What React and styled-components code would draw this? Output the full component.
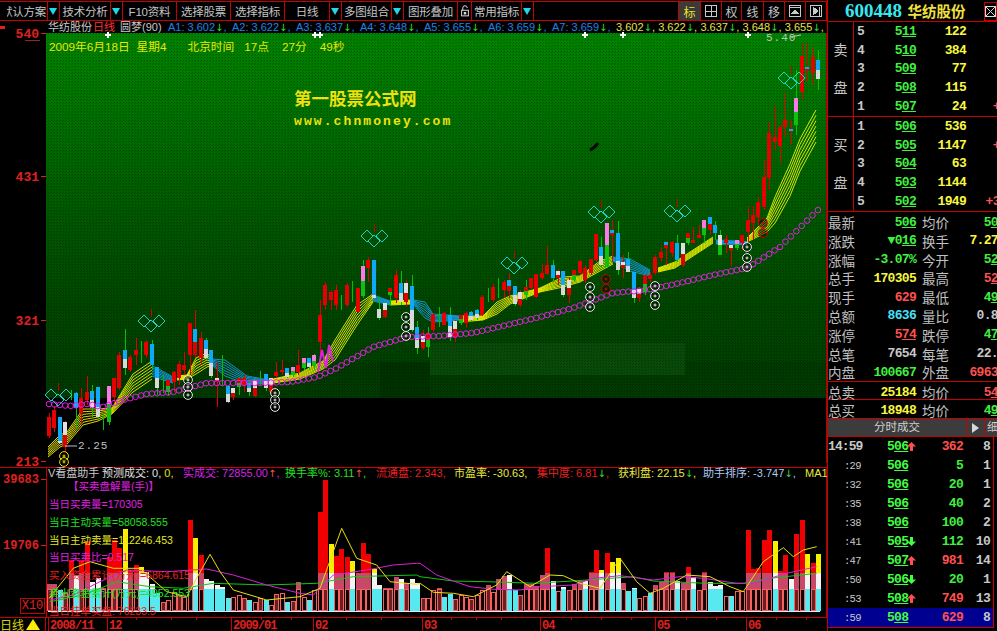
import React from 'react';
import styled, { createGlobalStyle } from 'styled-components';

const RED = '#c80000';
const CJK = '"Liberation Sans", "Noto Sans CJK SC", sans-serif';
const MONO = '"Liberation Mono", "Noto Sans CJK SC", monospace';

const Global = createGlobalStyle`
  html, body { margin: 0; padding: 0; background: #000; }
  * { box-sizing: border-box; }
`;

const Screen = styled.div`
  width: 997px; height: 631px; background: #000; display: flex; overflow: hidden;
  font-family: ${CJK}; color: #c8c8c8;
`;
const LeftColumn = styled.div`width: 827px; display: flex; flex-direction: column; flex: none;`;

/* toolbar */
const Toolbar = styled.div`
  margin-top: 1px; height: 20px; display: flex; flex: none;
  border-top: 1px solid ${RED}; border-bottom: 1px solid ${RED};
`;
const ToolItem = styled.div`
  width: ${p => p.$w}px; flex: none; display: flex; align-items: center;
  justify-content: center;
  border-right: 1px solid ${RED}; font-size: 11.5px; color: #c4c4c4; overflow: hidden; white-space: nowrap;
`;
const ToolGap = styled.div`flex: 1;border-right: 1px solid ${RED};`;
const ToolLabel = styled.span`
  flex: 1; text-align: center; letter-spacing: -0.2px;
  clip-path: ${p => (p.$cut ? 'inset(0 0 0 7px)' : 'none')};
`;
const Caret = styled.span`
  flex: none; width: 11px; height: 100%; margin-right: 1px; border-left: 1px solid ${RED};
  display: flex; align-items: center; justify-content: center;
  &::after { content: ''; border-left: 4px solid transparent; border-right: 4px solid transparent; border-top: 7px solid #20d8e8; }
`;
const ToolIconBtn = styled.div`
  width: ${p => p.$w}px; flex: none; display: flex; align-items: center; justify-content: center;
  border-right: 1px solid ${RED}; font-size: 12px;
  background: ${p => (p.$on ? '#3a3a3a' : 'transparent')}; color: ${p => (p.$on ? '#f0e020' : '#c4c4c4')};
`;

/* chart panes */
const Pane = styled.div`position: relative; height: ${p => p.$h}px; flex: none; overflow: hidden;`;
const PlotSvg = styled.svg`display: block; width: 827px; height: 100%;`;
const InfoLine = styled.div`
  position: absolute; left: ${p => p.$left}px; right: 0; top: ${p => p.$top}px; height: 12px;
  display: flex; align-items: center; font-size: 11px; line-height: 12px; white-space: nowrap; overflow: hidden;
`;
const Info = styled.span`
  flex: none; width: ${p => (p.$w ? p.$w + 'px' : 'auto')}; color: ${p => p.$c || '#c8c8c8'};
  margin-right: ${p => p.$mr || 0}px;
`;
const Down = styled.span`color: #30e030; font-family: "DejaVu Sans", sans-serif; font-size: 10px;`;
const Up = styled.span`color: #ff5050; font-family: "DejaVu Sans", sans-serif; font-size: 10px;`;
const Hi = styled.span`color: #e0e020;`;
const DateLine = styled.div`
  position: absolute; left: 49px; top: 16px; display: flex; font-size: 11.7px; color: #e8e800; white-space: nowrap;
`;
const DatePart = styled.span`margin-right: ${p => p.$mr}px;`;
const Watermark = styled.div`
  position: absolute; left: 294px; top: 68px; display: flex; flex-direction: column; gap: 5px;
  color: #f0e010; font-weight: 700; white-space: nowrap;
`;
const WmTitle = styled.div`font-size: 17.5px; line-height: 20px;`;
const WmUrl = styled.div`font-family: ${MONO}; font-size: 13px; letter-spacing: 2.1px; line-height: 16px;`;
const PaneLabels = styled.div`
  position: absolute; left: 48px; top: 10px; display: flex; flex-direction: column; font-size: 10.5px;
`;
const PaneLabel = styled.div`
  height: 17.85px; line-height: 18px; color: ${p => p.$c}; white-space: nowrap; padding-left: ${p => p.$pl || 1}px;
`;
const ScaleBox = styled.div`
  position: absolute; left: 20px; top: 131px; width: 25px; height: 16px; border: 1px solid ${RED};
  color: #e02020; font-family: ${MONO}; font-size: 12px; line-height: 14px; text-align: center;
`;
const BottomBar = styled.div`
  height: 14px; flex: none; display: flex; border-top: 1px solid ${RED}; overflow: hidden;
`;
const PeriodTab = styled.div`
  width: 46px; flex: none; display: flex; align-items: center; gap: 2px; font-size: 12px; color: #d8d800;
  border-right: 1px solid ${RED}; padding-left: 0;
  &::after { content: ''; border-left: 7px solid transparent; border-right: 7px solid transparent; border-bottom: 11px solid #f8f000; }
`;
const TimeAxis = styled.svg`display: block; flex: 1; height: 100%;`;

/* right panel */
const RightPanel = styled.div`
  width: 170px; flex: none; display: flex; flex-direction: column; overflow: hidden;
  border-left: 1px solid ${RED};
`;
const TitleBar = styled.div`
  height: 22px; flex: none; display: flex; align-items: center; padding-left: 17px; border-bottom: 1px solid ${RED};
`;
const TitleCode = styled.span`
  font-family: "Liberation Serif", serif; font-weight: 700; font-size: 19px; color: #38e8f0; letter-spacing: 0; width: 63px;
`;
const TitleName = styled.span`font-size: 14.5px; font-weight: 700; color: #f0e040; width: 77px;`;
const CloseBtn = styled.div`
  width: 13px; height: 19px; border: 1px solid ${RED}; margin-top: 2px; display: flex; align-items: center; justify-content: center;
`;
const Book = styled.div`display: flex; height: ${p => p.$h}px; flex: none; border-bottom: 1px solid ${RED};`;
const BookSide = styled.div`
  width: 26px; flex: none; border-right: 1px solid ${RED}; display: flex; flex-direction: column; align-items: center;
  padding-top: 20px; gap: 22px; font-size: 14px; line-height: 16px; color: #c8c8c8;
`;
const BookRows = styled.div`flex: 1; display: flex; flex-direction: column;`;
const BookRow = styled.div`
  height: 18.8px; flex: none; display: grid; grid-template-columns: 12px 50px 50px 48px; align-items: center;
  font-family: ${MONO}; font-weight: 700; font-size: 13px; white-space: nowrap;
`;
const Cell = styled.span`
  text-align: ${p => (p.$left ? 'left' : 'right')}; color: ${p => p.$c || '#c8c8c8'};
  padding-left: ${p => p.$pl || 0}px; letter-spacing: -0.7px;
`;
const Px = styled.span`text-decoration: underline; text-underline-offset: 1px; text-decoration-thickness: 1px;`;
const StatBlock = styled.div`display: flex; flex-direction: column; flex: none;`;
const StatRow = styled.div`
  height: ${p => p.$h || 18.8}px; flex: none; display: grid; grid-template-columns: 30px 58px 34px 55px; align-items: center;
  white-space: nowrap; border-bottom: ${p => (p.$line ? `1px solid ${RED}` : 'none')};
  border-top: ${p => (p.$lineTop ? `1px solid ${RED}` : 'none')};
`;
const StatLabel = styled.span`font-size: 13.5px; color: #c0c0c0; padding-left: ${p => p.$pl || 0}px;`;
const StatValue = styled.span`
  font-family: ${MONO}; font-weight: 700; font-size: 13px; letter-spacing: -0.7px; text-align: right; color: ${p => p.$c};
`;
const TabBar = styled.div`
  height: 18px; flex: none; display: flex; background: #3c3c3c; border-bottom: 1px solid ${RED}; font-size: 11.5px;
`;
const TabTitle = styled.div`width: 138px; flex: none; text-align: center; line-height: 17px; color: #d0d0d0;`;
const TabBtn = styled.div`
  width: 19px; flex: none; border-left: 1px solid ${RED}; border-right: 1px solid ${RED}; display: flex; align-items: center; justify-content: center;
  &::after { content: ''; border-top: 5px solid transparent; border-bottom: 5px solid transparent; border-left: 7px solid #d8d8d8; }
`;
const TabEnd = styled.div`flex: 1; line-height: 17px; padding-left: 2px; overflow: hidden; white-space: nowrap;color: #d0d0d0;`;
const Trades = styled.div`width: 166px; flex: none; border-right: 1px solid ${RED}; border-bottom: 1px solid ${RED}; display: flex; flex-direction: column;`;
const TradeRow = styled.div`
  height: 19px; flex: none; display: grid; grid-template-columns: 33px 56px 46px 27px; align-items: center; white-space: nowrap;
  background: ${p => (p.$sel ? '#000090' : 'transparent')};
  font-family: ${MONO}; font-weight: 700; font-size: 13px;
`;
const TradeTime = styled.span`
  text-align: right; color: #c8c8c8; letter-spacing: ${p => (p.$big ? '-0.9px' : '-0.6px')};
  font-size: ${p => (p.$big ? 13 : 10.5)}px; font-weight: ${p => (p.$big ? 700 : 400)};
`;
const TradePrice = styled.span`
  display: flex; align-items: center; gap: 0; padding-left: 26px; color: #40ff40; letter-spacing: -0.7px;
`;
const ArrowSvg = styled.svg`flex: none; margin-left: -1px; display: block;`;

/* ---------- data ---------- */
const X = i => 49 + 5.415 * i;
const candles = [
[413,417,436,438,'R'],[406,410,428,432,'R'],[417,417,443,443,'B',.92],[421,422,447,452,'W'],[390,390,400,400,'G'],[392,393,408,427,'B',1],[388,398,413,424,'R'],[376,392,400,405,'R'],
[385,391,408,417,'B'],[387,387,417,420,'B',.66],[413,413,430,430,'G'],[386,386,422,425,'P'],[378,378,397,403,'R'],[352,355,388,390,'R'],[329,350,368,375,'B'],[355,357,370,372,'R'],
[338,350,355,365,'R'],[341,350,352,363,'G'],[340,342,355,358,'R'],[340,344,365,370,'B',1],[367,367,388,395,'B'],[375,380,385,393,'G'],[380,380,392,396,'M'],[371,372,382,392,'R'],
[361,364,378,385,'R'],[352,365,370,375,'R'],[323,323,355,375,'R'],[310,329,355,358,'C'],[332,338,358,365,'R'],[338,340,358,360,'B'],[350,350,376,378,'B'],[362,378,382,407,'W'],
[355,355,385,385,'G'],[386,386,402,403,'B'],[388,388,397,400,'W'],[377,378,387,395,'M'],[375,378,385,392,'R'],[380,383,392,396,'B'],[380,380,396,397,'W'],[371,378,382,385,'G'],
[374,374,388,391,'B'],[378,378,392,394,'W'],[362,372,376,378,'R'],[360,370,372,375,'R'],[368,368,377,378,'B'],[367,367,375,377,'P'],[350,365,372,375,'R'],[358,358,368,370,'P'],
[358,358,367,370,'B'],[354,355,366,370,'P'],[300,315,342,355,'R'],[282,285,305,310,'R'],[290,292,300,310,'R'],[285,290,305,310,'R'],[295,295,310,310,'G'],[283,285,305,307,'R'],
[281,281,302,302,'G'],[288,288,312,312,'R'],[260,266,296,298,'P'],[257,260,268,282,'R'],[260,260,298,298,'B',.92],[297,309,318,320,'B',0],[303,303,317,318,'W'],[288,288,295,306,'M'],
[270,275,298,303,'R'],[271,283,302,305,'B'],[280,283,302,307,'W'],[275,286,330,332,'B',.55],[321,327,348,354,'B'],[330,336,348,350,'W'],[327,333,347,357,'M'],[313,314,330,332,'R'],
[307,307,327,327,'G'],[312,313,325,325,'R'],[307,315,337,341,'B'],[320,321,337,342,'W'],[315,315,323,325,'M'],[312,313,323,328,'R'],[311,312,320,322,'B'],[309,310,318,320,'B'],
[295,297,315,316,'R'],[288,288,302,302,'G'],[284,287,300,302,'R'],[278,278,298,298,'G'],[280,282,290,298,'R'],[273,280,291,298,'C'],[286,286,304,306,'B'],[290,292,305,307,'W'],
[280,287,295,300,'M'],[278,278,288,290,'R'],[274,274,297,298,'R'],[264,273,278,280,'R'],[246,265,274,275,'R'],[260,265,278,282,'B',1],[269,271,278,285,'W'],[271,271,295,297,'B',.6],
[277,280,295,303,'W'],[270,270,280,282,'M'],[260,261,273,275,'R'],[265,268,280,283,'R'],[259,259,273,275,'R'],[234,234,260,262,'R'],[237,247,265,268,'B'],[223,223,267,268,'P'],
[220,230,235,262,'C'],[221,233,270,275,'B',.75],[255,262,268,278,'W'],[252,259,272,272,'B'],[272,272,298,303,'B',.7],[287,289,298,302,'W'],[275,275,292,295,'M'],[272,275,279,282,'R'],
[255,257,273,275,'R'],[247,252,258,262,'R'],[241,242,248,265,'C'],[241,242,253,257,'R'],[235,243,260,262,'B',1],[243,243,265,267,'W'],[233,233,243,245,'M'],[227,240,243,243,'R'],
[225,235,238,238,'R'],[220,220,235,243,'P'],[217,217,230,235,'C'],[221,225,233,240,'B',1],[230,235,255,255,'X'],[235,239,243,253,'R'],[245,245,250,266,'W'],[240,240,248,250,'P'],
[235,235,243,250,'R'],[206,220,232,242,'R'],[206,215,223,240,'R'],[197,202,217,225,'R'],[160,177,207,210,'R'],[122,133,178,190,'R'],[106,137,142,150,'R'],[125,127,146,163,'R'],
[93,120,127,137,'R'],[120,129,132,145,'C'],[70,98,125,135,'P'],[43,56,92,100,'R'],[43,67,71,82,'C'],[47,57,73,85,'R'],[50,60,79,90,'B'],
];
const palette = {
  R: ['#e80000', '#e80000', '#e00000'], G: ['#00c000', '#00c000', '#00c000'], B: ['#10a8f8', '#d8d8d8', '#00c000'],
  C: ['#10a8f8', '#e00000', '#e00000'], W: ['#e0e0e0', '#e00000', '#e00000'], P: ['#ff78e8', '#10c010', '#00c000'],
  M: ['#e00000', '#10c010', '#00c000'], X: ['#e0e0e0', '#10c010', '#00c000'],
};
const YEL = '#ffff00', BLU = '#18a0f0';
const ribbons = [
  [YEL,[[48,452,5],[60,441,6],[67,438,6],[83,417,8],[98,415,6],[112,411,3],[133,383,9],[152,370,9]]],
  [BLU,[[152,371,5],[157,373,5],[173,380,3]]],
  [YEL,[[177,378,2],[187,377,2],[196,366,8],[207,360,7],[212,362,3]]],
  [BLU,[[212,362,3],[225,368,8],[247,380,4],[272,382,1.5]]],
  [YEL,[[273,381,2],[300,376,3],[323,365,4],[335,350,10],[357,315,10],[373,298,4]]],
  [BLU,[[373,298,3],[390,303,2]]],
  [YEL,[[390,303,2],[412,302,2]]],
  [BLU,[[413,302,2],[425,310,8],[433,318,4],[460,318,2]]],
  [YEL,[[460,319,3],[483,318,2],[497,308,6],[510,300,4],[525,295,3],[540,290,2],[563,282,5],[580,279,3],[600,266,5],[613,260,4]]],
  [BLU,[[613,259,2],[630,265,6],[650,273,3]]],
  [YEL,[[658,270,2],[675,265,3],[690,255,3],[713,240,3]]],
  [BLU,[[716,242,2],[747,243,1.5]]],
  [YEL,[[747,240,2],[767,225,7],[775,210,13],[790,180,16],[800,155,16],[816,126,16]]],
];
const purpleKeys = [[49,404],[70,406],[87,404],[103,407],[123,400],[147,394],[173,392],[207,383],[230,383],[257,383],[290,382],[317,377],[337,368],[373,347],[407,337],[440,336],[473,333],[507,325],[540,317],[573,308],[613,293],[647,290],[680,283],[713,275],[747,268],[780,247],[818,210]];
const lerp = (keys, x) => {
  for (let k = 1; k < keys.length; k++) {
    if (x <= keys[k][0]) {
      const [a, b] = [keys[k - 1], keys[k]];
      return a[1] + (b[1] - a[1]) * (x - a[0]) / (b[0] - a[0]);
    }
  }
  return keys[keys.length - 1][1];
};
const diamonds = [[58, 400], [151, 326], [374, 241], [514, 268], [601, 217], [677, 216], [791, 83]];
const stacks = [
  [188, [380, 387, 395], '#e8e8e8'], [275, [393, 400, 407], '#e8e8e8'], [406, [317, 327, 336], '#e8e8e8'], [590, [287, 297, 307], '#e8e8e8'],
  [655, [286, 296, 305], '#e8e8e8'], [747, [247, 258, 267], '#e8e8e8'], [606, [279, 289], '#d00000'], [763, [223, 233], '#d00000'], [64, [456, 462], '#e8e000'],
];
const crosses = [[108, 35], [315, 35], [320, 35], [585, 35], [623, 35], [748, 35]];

const barSpec = 'r388 r388 c405 r415 r315 c360 r315 r258 c380 c370 r400 r305 r255 r280 c222 r345 r330 c335 c350 c388 c415 r440 r435 r410 r420 r425 r195 c250 r300 c372 c378 c390 c395 c430 r425 r420 r430 c435 r440 r430 c435 r450 r418 r415 c440 r438 r382 r425 c435 r405 r170 r75 c268 r303 r282 r305 c318 r355 r265 r298 c342 c390 r400 r398 r365 c372 r385 c372 c385 r430 r428 r405 r400 c425 c417 r432 r420 r425 r432 r420 r405 r390 r410 r372 r363 c360 c405 r420 r388 r388 r392 r360 r280 c377 r408 c397 r405 r388 r378 c377 r350 r285 c345 r295 c320 c310 r385 c408 c400 r430 r423 c415 r390 r380 r352 r350 c378 r385 r336 c365 r405 r352 c380 c392 c390 r423 c423 r408 r408 r225 r342 r338 r255 r225 c258 r348 r300 c372 r237 r195 c298 r323 c298'.split(' ');
const zy = v => 455 + v / 3;
const BAND_T = 572.5, BAND_M = 589, BASE = 611;

const join = (a, b) => [...a.map(([x, y]) => [x / 3, zy(y)]), ...b.map(([x, y]) => [420 + x / 3, zy(y)])].map(p => p.map(n => n.toFixed(1)).join(',')).join(' ');
const yellowLine = join(
  [[147,430],[220,340],[270,320],[340,340],[420,340],[500,410],[560,425],[590,370],[630,298],[660,350],[700,405],[800,435],[900,425],[960,400],[1025,220],[1070,310],[1130,330],[1170,380],[1250,388]],
  [[0,385],[40,412],[100,415],[160,425],[230,390],[260,350],[330,395],[390,360],[430,362],[480,385],[540,400],[600,310],[650,380],[690,415],[730,400],[800,360],[870,365],[930,395],[970,410],[1030,320],[1090,278],[1120,305],[1150,285],[1190,275]]);
const magentaLine = join(
  [[150,435],[220,420],[300,380],[380,345],[500,350],[620,342],[700,360],[800,390],[900,415],[940,420],[1000,360],[1100,345],[1180,330],[1250,325]],
  [[0,325],[50,360],[100,378],[150,395],[220,403],[300,405],[360,395],[460,390],[520,370],[600,362],[700,375],[780,365],[850,370],[950,385],[1000,385],[1100,355],[1190,335]]);
const greenLine = join(
  [[150,440],[250,420],[350,380],[450,395],[550,400],[640,385],[800,390],[950,385],[1060,365],[1250,360]],
  [[0,365],[100,378],[200,380],[350,385],[500,375],[640,365],[700,378],[860,385],[970,385],[1050,370],[1190,355]]);

/* ---------- drawings ---------- */
const MainPlot = () => (
  <PlotSvg viewBox="0 21 827 446">
    <defs>
      <linearGradient id="bg" x1="0" y1="33" x2="0" y2="397" gradientUnits="userSpaceOnUse">
        <stop offset="0" stopColor="#008400" /><stop offset=".25" stopColor="#006e00" /><stop offset=".5" stopColor="#005800" />
        <stop offset=".75" stopColor="#004600" /><stop offset=".9" stopColor="#004000" /><stop offset=".905" stopColor="#003a00" /><stop offset="1" stopColor="#003a00" />
      </linearGradient>
      <pattern id="dither" width="3" height="3" patternUnits="userSpaceOnUse">
        <rect width="1" height="1" fill="#000" opacity=".3" /><rect x="2" y="1" width="1" height="1" fill="#000" opacity=".2" />
      </pattern>
    </defs>
    <g shapeRendering="crispEdges">
      <rect x="46" y="33" width="781" height="365" fill="url(#bg)" />
      <rect x="430" y="343" width="255" height="32" fill="#084a08" />
      <rect x="380" y="362" width="50" height="36" fill="#003200" />
      <rect x="46" y="33" width="781" height="365" fill="url(#dither)" />
      {[33, 176, 320, 461].map(y => <rect key={y} x="41" y={y} width="5" height="1" fill="#e02020" />)}
      <rect x="0" y="26" width="5" height="3" fill="#e02020" />
      <rect x="25" y="40" width="15" height="1" fill="#a02020" />
      <rect x="826" y="33" width="1" height="430" fill="#901010" />
    </g>
    {[[38, '540'], [181, '431'], [325, '321'], [466, '213']].map(([y, t]) => (
      <text key={t} x="39" y={y} textAnchor="end" fontFamily="Liberation Mono" fontWeight="700" fontSize="13" fill="#e02020">{t}</text>
    ))}
    <g fill="none" strokeWidth=".85">
      {ribbons.map(([c, pts], r) => (
        <g key={r} stroke={c}>
          {[-3, -2, -1, 0, 1, 2, 3].map(k => (
            <polyline key={k} points={pts.map(([x, y, h]) => `${x},${(y + (k * h) / 3).toFixed(1)}`).join(' ')} />
          ))}
        </g>
      ))}
    </g>
    <g shapeRendering="crispEdges">
      {candles.map(([wt, bt, bb, wb, k, split = .5], i) => {
        const x = Math.round(X(i));
        const [top, bottom, wick] = palette[k];
        const mid = Math.round(bt + (bb - bt) * split);
        if (k === 'G') return <rect key={i} x={x} y={wt} width="1" height={wb - wt} fill={wick} />;
        return (
          <g key={i}>
            <rect x={x} y={wt} width="1" height={wb - wt} fill={wick} />
            <rect x={x - 2} y={bt} width="4" height={mid - bt} fill={top} />
            <rect x={x - 2} y={mid} width="4" height={bb - mid} fill={bottom} />
          </g>
        );
      })}
    </g>
    <path d="M318 372L322 350L326 368L329 345L333 362" fill="none" stroke="#e020e0" strokeWidth="2" />
    <g fill="none" stroke="#e020e0">
      {candles.map((_, i) => <circle key={i} cx={X(i).toFixed(1)} cy={lerp(purpleKeys, X(i)).toFixed(1)} r="2.8" />)}
    </g>
    {diamonds.map(([x, y]) => (
      <g key={x}>
        <rect x={x} y={y - 17} width="1" height="8" fill="#d00000" shapeRendering="crispEdges" />
        <g fill="none" stroke="#20d0d0">
          <polygon points={`${x - 7},${y - 11} ${x - 1},${y - 5} ${x - 7},${y + 1} ${x - 13},${y - 5}`} />
          <polygon points={`${x},${y - 6} ${x + 6},${y} ${x},${y + 6} ${x - 6},${y}`} />
          <polygon points={`${x + 8},${y - 11} ${x + 14},${y - 5} ${x + 8},${y + 1} ${x + 2},${y - 5}`} />
        </g>
      </g>
    ))}
    {stacks.map(([x, ys, c]) => ys.map(y => (
      <g key={`${x}-${y}`}>
        <circle cx={x} cy={y} r="4.4" fill="rgba(0,0,0,.45)" stroke={c} />
        <path d={`M${x - 1.5} ${y}H${x + 1.5}M${x} ${y - 1.5}V${y + 1.5}`} stroke={c} />
      </g>
    )))}
    {crosses.map(([x, y]) => <path key={x} d={`M${x - 3} ${y}H${x + 3}M${x} ${y - 3}V${y + 3}`} stroke="#fff" strokeWidth="2" shapeRendering="crispEdges" />)}
    <path d="M590 150 Q595 148 598 143" stroke="#000" strokeWidth="3" fill="none" />
    <path d="M65 446H77" stroke="#c0c0c0" />
    <text x="78" y="449" fontFamily="Liberation Mono" fontSize="11" letterSpacing="1" fill="#c0c0c0">2.25</text>
    <text x="766" y="41" fontFamily="Liberation Mono" fontSize="11" letterSpacing="1" fill="#b8c8b8">5.40</text>
    <path d="M790 37L801 35" stroke="#c0c0c0" />
  </PlotSvg>
);

const VolumePlot = () => (
  <PlotSvg viewBox="0 467 827 150">
    <g shapeRendering="crispEdges">
      <rect x="0" y="467" width="827" height="1" fill={RED} />
      <rect x="46" y="467" width="1" height="150" fill={RED} />
      <rect x="41" y="479" width="5" height="1" fill="#e02020" />
      <rect x="41" y="545" width="5" height="1" fill="#e02020" />
      <rect x="826" y="467" width="1" height="150" fill="#901010" />
      {barSpec.map((spec, i) => {
        const kind = spec[0];
        const top = Math.round(zy(+spec.slice(1)));
        const x = Math.round(X(i)) - 2;
        const parts = [];
        if (kind === 'r') {
          if (top < BAND_T) parts.push(['#f00000', top, BAND_T]);
          if (top < BAND_M) parts.push(['#c84868', Math.max(top, BAND_T), BAND_M]);
          const h = Math.min(Math.max(top, BAND_M), BASE - 1);
          return (
            <g key={i}>
              {parts.map(([c, a, b], n) => <rect key={n} x={x} y={a} width="5" height={Math.max(b - a, 0)} fill={c} />)}
              <rect x={x + .5} y={h + .5} width="4" height={BASE - h - 1} fill={i % 3 === 0 ? '#6a2020' : '#100404'} stroke="#f86060" />
            </g>
          );
        }
        if (top < BAND_T) parts.push(['#f8f000', top, BAND_T]);
        if (top < BAND_M) parts.push(['#f4f4f4', Math.max(top, BAND_T), BAND_M]);
        parts.push(['#58e8f0', Math.max(top, BAND_M), BASE]);
        return <g key={i}>{parts.map(([c, a, b], n) => <rect key={n} x={x} y={a} width="5" height={Math.max(b - a, 0)} fill={c} />)}</g>;
      })}
      <rect x="48" y={BASE} width="772" height="1" fill="#e8e8f8" />
    </g>
    <polyline points={greenLine} fill="none" stroke="#10c810" />
    <polyline points={magentaLine} fill="none" stroke="#d820d8" />
    <polyline points={yellowLine} fill="none" stroke="#e8e010" />
    <text x="39" y="483" textAnchor="end" fontFamily="Liberation Mono" fontWeight="700" fontSize="12" fill="#e02020">39683</text>
    <text x="39" y="549" textAnchor="end" fontFamily="Liberation Mono" fontWeight="700" fontSize="12" fill="#e02020">19706</text>
  </PlotSvg>
);

const axisLabels = [[4, '2008/11'], [63, '12'], [187, '2009/01'], [269, '02'], [378, '03'], [496, '04'], [611, '05'], [702, '06']];
const minorTicks = [90, 125, 150, 215, 245, 300, 335, 405, 430, 455, 525, 555, 585, 640, 670, 730, 760];
const Timeline = () => (
  <TimeAxis viewBox="0 0 781 13">
    <g shapeRendering="crispEdges">
      {axisLabels.map(([x]) => <rect key={x} x={x - 2} y="0" width="1" height="13" fill={RED} />)}
      {minorTicks.map(x => <rect key={x} x={x} y="0" width="1" height="2" fill={RED} />)}
    </g>
    {axisLabels.map(([x, t]) => (
      <text key={t} x={x} y="11" fontFamily="Liberation Mono" fontSize="12" letterSpacing="-1" fontWeight="700" fill="#e02020">{t}</text>
    ))}
  </TimeAxis>
);

const IconSvg = styled.svg`display: block; width: ${p => p.$s || 14}px; height: ${p => p.$s || 14}px;`;
const PlusBoxIcon = () => <IconSvg viewBox="0 0 14 14" fill="none" stroke="#c8c8c8" shapeRendering="crispEdges"><rect x="1.5" y="1.5" width="11" height="11" /><path d="M7.5 2V12M2 7.5H12" /></IconSvg>;
const EjectIcon = () => <IconSvg viewBox="0 0 14 14" fill="none" stroke="#c8c8c8" shapeRendering="crispEdges"><rect x="1.5" y="1.5" width="11" height="11" /><path d="M2 3.5H12" /><path d="M4 9.5L7 6.5L10 9.5Z" fill="#c8c8c8" /></IconSvg>;
const NextIcon = () => <IconSvg viewBox="0 0 14 14" fill="none" stroke="#c8c8c8" shapeRendering="crispEdges"><rect x="1.5" y="1.5" width="11" height="11" /><path d="M4 3L9 7L4 11Z" fill="#c8c8c8" /><path d="M10.5 2.5V11.5" /></IconSvg>;
const LockIcon = () => <IconSvg viewBox="0 0 12 16" $s={12} fill="none" stroke="#e0e0e0" strokeWidth="1.3"><path d="M3 7V4a3 3 0 0 1 6 0" /><rect x="1.5" y="7" width="9" height="7.5" /><rect x="5" y="10" width="2" height="2" fill="#e0e0e0" /></IconSvg>;
const CloseIcon = () => <IconSvg viewBox="0 0 11 11" $s={11} fill="none" stroke="#d8d8d8"><rect x=".5" y=".5" width="10" height="10" /><path d="M1 1L10 10M10 1L1 10" /></IconSvg>;
const ArrowMark = ({ up }) => (
  <ArrowSvg width="9" height="9" viewBox="0 0 9 9">
    <path d={up ? 'M4.5 0L9 4.5H6V9H3V4.5H0Z' : 'M4.5 9L9 4.5H6V0H3V4.5H0Z'} fill={up ? '#ff5050' : '#40ff40'} />
  </ArrowSvg>
);

const Price = ({ v, lead = 1 }) => <>{v.slice(0, lead)}<Px>{v.slice(lead)}</Px></>;

const sell = [['5','511','122',''],['4','510','384',''],['3','509','77',''],['2','508','115',''],['1','507','24','+12']];
const buy = [['1','506','536',''],['2','505','1147','+12'],['3','504','63',''],['4','503','1144',''],['5','502','1949','+312']];
const G = '#40f040', Y = '#f8f840', R = '#ff5050', C = '#48e0f8', W = '#c8c8c8';
const stats = [
  ['最新', '506', G, '均价', '506', G, true],
  ['涨跌', '▼016', G, '换手', '7.27%', Y],
  ['涨幅', '-3.07%', G, '今开', '522', G, true],
  ['总手', '170305', Y, '最高', '522', R, true],
  ['现手', '629', R, '最低', '495', G, true],
  ['总额', '8636', C, '量比', '0.85', W],
  ['涨停', '574', R, '跌停', '470', G, true],
  ['总笔', '7654', W, '每笔', '22.2', W],
  ['内盘', '100667', G, '外盘', '69638', R],
];
const trades = [
  ['14:59','506','up','362','8',R,true],[':29','506','','5','1',G],[':32','506','','20','1',G],[':35','506','','40','2',G],[':38','506','','100','2',G],
  [':41','505','down','112','10',G],[':47','507','up','981','14',R],[':50','506','down','20','1',G],[':53','508','up','749','13',R],[':59','508','','629','8',R],
];
const tools = [['默认方案',60,true,true],['技术分析',63,true],['F10资料',54],['选择股票',54],['选择指标',54],['日线',57,true],['多图组合',62,true],['图形叠加',54]];
const tools2 = [['常用指标',62,true]];
const aGroups = ['A1: 3.602','A2: 3.622','A3: 3.637','A4: 3.648','A5: 3.655','A6: 3.659','A7: 3.659'];
const yGroups = ['3.602','3.622','3.637','3.648','3.655'];

export default function App() {
  return (
    <Screen>
      <Global />
      <LeftColumn>
        <Toolbar>
          {tools.map(([t, w, caret, cut]) => (
            <ToolItem key={t} $w={w}>
              <ToolLabel $cut={cut}>{t}</ToolLabel>{caret && <Caret />}
            </ToolItem>
          ))}
          <ToolIconBtn $w={14}><LockIcon /></ToolIconBtn>
          {tools2.map(([t, w, caret]) => (
            <ToolItem key={t} $w={w}><ToolLabel>{t}</ToolLabel>{caret && <Caret />}</ToolItem>
          ))}
          <ToolGap />
          <ToolIconBtn $w={22} $on>标</ToolIconBtn>
          <ToolIconBtn $w={21}><PlusBoxIcon /></ToolIconBtn>
          <ToolIconBtn $w={20}>权</ToolIconBtn>
          <ToolIconBtn $w={22}>线</ToolIconBtn>
          <ToolIconBtn $w={21}>移</ToolIconBtn>
          <ToolIconBtn $w={21}><EjectIcon /></ToolIconBtn>
          <ToolIconBtn $w={21}><NextIcon /></ToolIconBtn>
        </Toolbar>
        <Pane $h={446}>
          <MainPlot />
          <InfoLine $left={48} $top={0}>
            <Info $w={45}>华纺股份</Info>
            <Info $w={27} $c="#ff3030">日线</Info>
            <Info $w={48}>圆梦(90)</Info>
            {aGroups.map(t => <Info key={t} $w={64} $c="#1c84e8">{t}<Down>↓</Down>,</Info>)}
            {yGroups.map(t => <Info key={t} $w={42.2} $c="#e8e040">{t}<Down>↓</Down>,</Info>)}
          </InfoLine>
          <DateLine>
            <DatePart $mr={7}>2009年6月18日</DatePart>
            <DatePart $mr={21}>星期4</DatePart>
            <DatePart $mr={10}>北京时间</DatePart>
            <DatePart $mr={13}>17点</DatePart>
            <DatePart $mr={13}>27分</DatePart>
            <DatePart $mr={0}>49秒</DatePart>
          </DateLine>
          <Watermark>
            <WmTitle>第一股票公式网</WmTitle>
            <WmUrl>www.chnmoney.com</WmUrl>
          </Watermark>
        </Pane>
        <Pane $h={150}>
          <VolumePlot />
          <InfoLine $left={48} $top={0}>
            <Info $w={54}>V看盘助手</Info>
            <Info $w={81} $c="#e0e0e0">预测成交: 0, <Hi>0,</Hi></Info>
            <Info $w={102} $c="#d820e8">实成交: 72855.00<Up>↑</Up>,</Info>
            <Info $w={91} $c="#20e020">换手率%: 3.11<Up>↑</Up>,</Info>
            <Info $w={78} $c="#e82020">流通盘: 2.343,</Info>
            <Info $w={83} $c="#e8e840">市盈率: -30.63,</Info>
            <Info $w={81} $c="#e82020">集中度: 6.81<Down>↓</Down>,</Info>
            <Info $w={85} $c="#e8e840">获利盘: 22.15<Down>↓</Down>,</Info>
            <Info $w={102} $c="#b0c8f0">助手排序: -3.747<Down>↓</Down>,</Info>
            <Info $c="#e8e840">MA1:</Info>
          </InfoLine>
          <PaneLabels>
            <PaneLabel $c="#e020e0" $pl={20}>【买卖盘解量(手)】</PaneLabel>
            <PaneLabel $c="#e020e0">当日买卖量=170305</PaneLabel>
            <PaneLabel $c="#20e020">当日主动买量=58058.555</PaneLabel>
            <PaneLabel $c="#e8e820">当日主动卖量=112246.453</PaneLabel>
            <PaneLabel $c="#e020e0">当日买卖比=0.517</PaneLabel>
            <PaneLabel $c="#e82020">买入资金累计(万元)=6864.615</PaneLabel>
            <PaneLabel $c="#20e020">卖出资金累计(万元)=4952.553</PaneLabel>
            <PaneLabel $c="#e82020">当日挂单买盘: 76233.5</PaneLabel>
          </PaneLabels>
          <ScaleBox>X10</ScaleBox>
        </Pane>
        <BottomBar>
          <PeriodTab>日线</PeriodTab>
          <Timeline />
        </BottomBar>
      </LeftColumn>
      <RightPanel>
        <TitleBar>
          <TitleCode>600448</TitleCode>
          <TitleName>华纺股份</TitleName>
          <CloseBtn><CloseIcon /></CloseBtn>
        </TitleBar>
        <Book $h={95}>
          <BookSide><span>卖</span><span>盘</span></BookSide>
          <BookRows>
            {sell.map(([n, p, v, e]) => (
              <BookRow key={n}>
                <Cell $left $pl={3}>{n}</Cell><Cell $c={G}><Price v={p} /></Cell><Cell $c={Y}>{v}</Cell><Cell $c={R}>{e}</Cell>
              </BookRow>
            ))}
          </BookRows>
        </Book>
        <Book $h={95}>
          <BookSide><span>买</span><span>盘</span></BookSide>
          <BookRows>
            {buy.map(([n, p, v, e]) => (
              <BookRow key={n}>
                <Cell $left $pl={3}>{n}</Cell><Cell $c={G}><Price v={p} /></Cell><Cell $c={Y}>{v}</Cell><Cell $c={R}>{e}</Cell>
              </BookRow>
            ))}
          </BookRows>
        </Book>
        <StatBlock>
          {stats.map(([a, v, c, b, w, d, u]) => (
            <StatRow key={a}>
              <StatLabel>{a}</StatLabel>
              <StatValue $c={c}>{a === '最新' || a === '涨停' ? <Price v={v} /> : a === '涨跌' ? <>▼0<Px>16</Px></> : v}</StatValue>
              <StatLabel $pl={6}>{b}</StatLabel>
              <StatValue $c={d}>{u ? <Price v={w} /> : w}</StatValue>
            </StatRow>
          ))}
        </StatBlock>
        <StatRow $h={19} $line $lineTop>
          <StatLabel>总卖</StatLabel><StatValue $c={Y}>25184</StatValue><StatLabel $pl={6}>均价</StatLabel><StatValue $c={R}><Price v="545" /></StatValue>
        </StatRow>
        <StatRow $h={19} $line>
          <StatLabel>总买</StatLabel><StatValue $c={Y}>18948</StatValue><StatLabel $pl={6}>均价</StatLabel><StatValue $c={G}><Price v="492" /></StatValue>
        </StatRow>
        <TabBar>
          <TabTitle>分时成交</TabTitle>
          <TabBtn />
          <TabEnd>细</TabEnd>
        </TabBar>
        <Trades>
          {trades.map(([t, p, dir, v, n, c, big], i) => (
            <TradeRow key={t} $sel={i === 9}>
              <TradeTime $big={big}>{t}</TradeTime>
              <TradePrice><Price v={p} />{dir && <ArrowMark up={dir === 'up'} />}</TradePrice>
              <Cell $c={c}>{v}</Cell>
              <Cell $c={W}>{n}</Cell>
            </TradeRow>
          ))}
        </Trades>
      </RightPanel>
    </Screen>
  );
}
